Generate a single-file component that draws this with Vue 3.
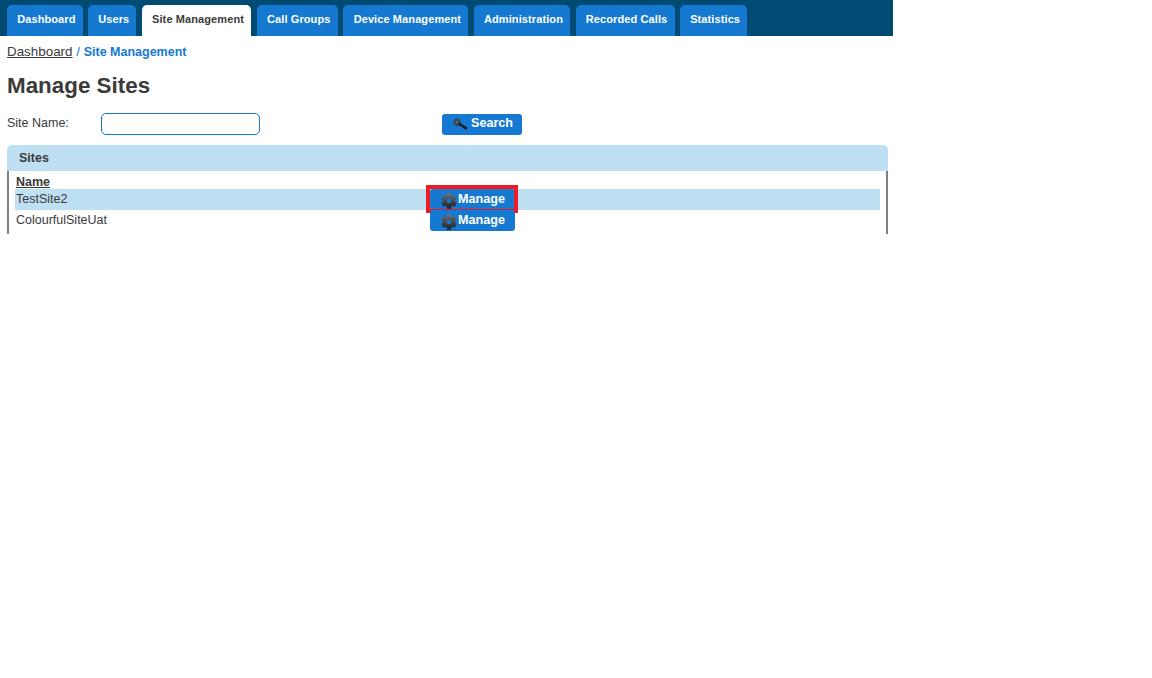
<template>
  <div class="page">
    <nav class="tabs">
      <a v-for="tab in tabs" :key="tab.name" class="tab" :class="{ active: tab.active }" :style="{ width: tab.width + 'px' }">{{ tab.name }}</a>
    </nav>

    <div class="content">
      <div class="crumbs">
        <a class="crumb-link">Dashboard</a>
        <span class="crumb-sep"> / </span>
        <span class="crumb-current">Site Management</span>
      </div>

      <h1 class="title">Manage Sites</h1>

      <div class="search-row">
        <label class="search-label">Site Name:</label>
        <input class="search-input" type="text" />
        <button class="btn search-btn" type="button">
          <svg class="search-icon" viewBox="0 0 16 12" width="16" height="12">
            <circle cx="5" cy="4.200" r="2.800" fill="#50606e" stroke="#3c444b" stroke-width="1.800" />
            <path d="M7.500 6 L14 10.300" stroke="#14202a" stroke-width="2.600" stroke-linecap="round" />
          </svg>
          <span>Search</span>
        </button>
      </div>

      <section class="panel">
        <div class="panel-head">Sites</div>
        <div class="panel-body">
          <div class="col-head">Name</div>
          <div v-for="(site, i) in sites" :key="site" class="site-row" :class="{ odd: i === 0 }">
            <span class="site-name">{{ site }}</span>
            <button class="btn manage-btn" type="button">
              <svg class="gear" viewBox="0 0 16 16" width="16" height="16">
                <defs>
                  <linearGradient :id="'gear' + i" x1="0" y1="0" x2="0" y2="1">
                    <stop offset="0" stop-color="#6f7478" />
                    <stop offset="0.5" stop-color="#41464b" />
                    <stop offset="1" stop-color="#1d2125" />
                  </linearGradient>
                </defs>
                <path
                  :fill="'url(#gear' + i + ')'"
                  fill-rule="evenodd"
                  d="M5.460 2.790 5.930.27h4.140l.47 2.520.7.400 2.420-.85 2.070 3.590-1.940 1.670v.8l1.940 1.670-2.070 3.590-2.420-.85-.7.400-.47 2.520H5.930l-.47-2.520-.7-.4-2.420.85L.27 10.070 2.210 8.400v-.8L.27 5.930 2.340 2.340l2.420.85zM8 5.700a2.300 2.300 0 1 0 0 4.600 2.300 2.300 0 0 0 0-4.600z"
                />
              </svg>
              <span>Manage</span>
            </button>
            <span v-if="i === 0" class="highlight"></span>
          </div>
        </div>
      </section>
    </div>
  </div>
</template>

<script setup>
const tabs = [
  { name: 'Dashboard', width: 75.7 },
  { name: 'Users', width: 48 },
  { name: 'Site Management', width: 109.3, active: true },
  { name: 'Call Groups', width: 81 },
  { name: 'Device Management', width: 125 },
  { name: 'Administration', width: 96 },
  { name: 'Recorded Calls', width: 99 },
  { name: 'Statistics', width: 67 }
]

const sites = ['TestSite2', 'ColourfulSiteUat']
</script>

<style>
html,
body {
  background: #fff;
}
</style>

<style scoped>
.page {
  width: 893px;
  font-family: "Liberation Sans", Arial, sans-serif;
  color: #3a3a3a;
}

.tabs {
  display: flex;
  gap: 5.6px;
  height: 36px;
  padding: 5px 0 0 7px;
  box-sizing: border-box;
  background: #004b73;
}

.tab {
  flex: none;
  box-sizing: border-box;
  height: 31px;
  padding-left: 3px;
  line-height: 28px;
  text-align: center;
  font-size: 11px;
  font-weight: bold;
  letter-spacing: 0.1px;
  color: #fff;
  background: #1679d1;
  border-radius: 5px 5px 0 0;
}

.tab.active {
  color: #3a3a3a;
  background: #fff;
}

.content {
  padding: 0 5px 0 7px;
}

.crumbs {
  height: 32px;
  line-height: 31px;
  font-size: 13.4px;
  white-space: pre;
}

.crumb-link {
  color: #3a3a3a;
  text-decoration: underline;
}

.crumb-sep {
  color: #1679d1;
}

.crumb-current {
  color: #1679d1;
  font-size: 12.5px;
  font-weight: bold;
}

.title {
  margin: 0;
  height: 40px;
  line-height: 35px;
  font-size: 22.4px;
  font-weight: bold;
}

.search-row {
  display: flex;
  align-items: center;
  height: 32px;
}

.search-label {
  width: 94px;
  padding-bottom: 3px;
  font-size: 12.5px;
}

.search-input {
  width: 159px;
  height: 22px;
  box-sizing: border-box;
  border: 1px solid #1679d1;
  border-radius: 5px;
  background: #fff;
  outline: none;
}

.btn {
  display: flex;
  align-items: center;
  padding: 0;
  border: none;
  border-radius: 3px;
  background: #1679d1;
  color: #fff;
  font-family: inherit;
  font-size: 12.6px;
  font-weight: bold;
}

.btn span {
  padding-bottom: 2px;
}

.search-btn {
  width: 80px;
  height: 21px;
  margin-left: 182px;
  padding-left: 10px;
  gap: 3px;
}

.panel {
  margin-top: 5px;
}

.panel-head {
  height: 26px;
  line-height: 26px;
  padding-left: 12px;
  font-size: 12.5px;
  font-weight: bold;
  background: #bfe0f2;
  border-radius: 5px 5px 0 0;
}

.panel-body {
  height: 63px;
  padding: 0 6px;
  border-left: 2px solid #808080;
  border-right: 2px solid #808080;
}

.col-head {
  height: 18px;
  line-height: 22px;
  padding-left: 1px;
  font-size: 12.5px;
  font-weight: bold;
  text-decoration: underline;
}

.site-row {
  position: relative;
  display: flex;
  align-items: center;
  height: 21px;
  font-size: 12.5px;
}

.site-row.odd {
  background: #bfe0f2;
}

.site-name {
  width: 415px;
  padding: 0 0 2px 1px;
  box-sizing: border-box;
}

.manage-btn {
  width: 85px;
  height: 21px;
  padding-left: 11px;
  gap: 1px;
}

.gear {
  margin-top: 2px;
}

.highlight {
  position: absolute;
  left: 411px;
  top: -4px;
  width: 92px;
  height: 28px;
  box-sizing: border-box;
  border: 4px solid #ed1c24;
}
</style>
